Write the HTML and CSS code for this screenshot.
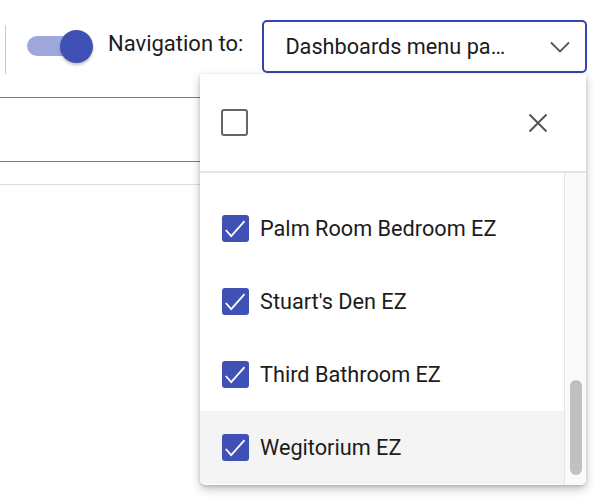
FILE: index.html
```html
<!DOCTYPE html>
<html>
<head>
<meta charset="utf-8">
<link rel="stylesheet" href="styles.css">
</head>
<body>
<div class="page">
  <div class="topbar">
    <div class="vdivider"></div>
    <div class="switch">
      <div class="track"></div>
      <div class="knob"></div>
    </div>
    <div class="label">Navigation to:</div>
    <div class="select">
      <span class="select-text">Dashboards menu pa…</span>
      <svg class="chevron" width="22" height="12" viewBox="0 0 22 12"><path d="M2 1.5 L11 10.5 L20 1.5" fill="none" stroke="#555" stroke-width="1.8"/></svg>
    </div>
  </div>
  <div class="field"></div>
  <div class="rule"></div>

  <div class="panel">
    <div class="panel-head">
      <span class="cb"></span>
      <svg class="close" width="20" height="20" viewBox="0 0 20 20"><path d="M1.5 1.5 L18.5 18.5 M18.5 1.5 L1.5 18.5" fill="none" stroke="#555" stroke-width="2"/></svg>
    </div>
    <div class="panel-body">
      <div class="list">
        <div class="spacer"></div>
        <div class="item"><span class="cb checked"><svg width="27" height="27" viewBox="0 0 27 27"><path d="M3.8 15 L9.2 21.2 L22.5 6.2" fill="none" stroke="#fff" stroke-width="1.8"/></svg></span><span class="item-text">Palm Room Bedroom EZ</span></div>
        <div class="item"><span class="cb checked"><svg width="27" height="27" viewBox="0 0 27 27"><path d="M3.8 15 L9.2 21.2 L22.5 6.2" fill="none" stroke="#fff" stroke-width="1.8"/></svg></span><span class="item-text">Stuart's Den EZ</span></div>
        <div class="item"><span class="cb checked"><svg width="27" height="27" viewBox="0 0 27 27"><path d="M3.8 15 L9.2 21.2 L22.5 6.2" fill="none" stroke="#fff" stroke-width="1.8"/></svg></span><span class="item-text">Third Bathroom EZ</span></div>
        <div class="item active"><span class="cb checked"><svg width="27" height="27" viewBox="0 0 27 27"><path d="M3.8 15 L9.2 21.2 L22.5 6.2" fill="none" stroke="#fff" stroke-width="1.8"/></svg></span><span class="item-text">Wegitorium EZ</span></div>
      </div>
      <div class="scrollbar"><div class="thumb"></div></div>
    </div>
  </div>
</div>
</body>
</html>
```
FILE: styles.css
```css
html, body {
  margin: 0;
  padding: 0;
  background: #fff;
}
body {
  font-family: Roboto, "Liberation Sans", sans-serif;
  color: #1c1c1c;
  width: 612px;
  height: 500px;
  overflow: hidden;
}
.page {
  position: relative;
  width: 612px;
  height: 500px;
}
.topbar {
  height: 74px;
  display: flex;
  align-items: flex-start;
  box-sizing: border-box;
  padding-top: 20px;
}
.vdivider {
  width: 1px;
  height: 49px;
  background: #c8c8c8;
  margin-left: 5px;
  margin-top: 5px;
}
.switch {
  position: relative;
  width: 66px;
  height: 33px;
  margin-left: 21px;
  margin-top: 10px;
}
.track {
  position: absolute;
  left: 0;
  top: 6px;
  width: 58px;
  height: 20px;
  border-radius: 10px;
  background: #9fa8da;
}
.knob {
  position: absolute;
  left: 33px;
  top: 0;
  width: 33px;
  height: 33px;
  border-radius: 50%;
  background: #3f51b5;
  box-shadow: 0 2px 3px rgba(0,0,0,0.25);
}
.label {
  margin-left: 15px;
  margin-top: 11px;
  font-size: 22px;
  line-height: 26px;
  color: #1c1c1c;
}
.select {
  margin-left: 19px;
  width: 325px;
  height: 53px;
  box-sizing: border-box;
  border: 2px solid #3346b0;
  border-radius: 5px;
  display: flex;
  align-items: center;
  padding-left: 21px;
  padding-right: 14px;
}
.select-text {
  flex: 1;
  font-size: 21.7px;
  color: #1c1c1c;
  white-space: nowrap;
}
.chevron {
  display: block;
}
.field {
  margin-top: 23px;
  width: 400px;
  height: 63px;
  border-top: 1px solid #7a7a7a;
  border-bottom: 1px solid #7a7a7a;
}
.rule {
  margin-top: 22px;
  width: 400px;
  height: 1px;
  background: #dcdcdc;
}
.panel {
  position: absolute;
  left: 200px;
  top: 74px;
  width: 386px;
  height: 411px;
  background: #fff;
  border-radius: 0 0 5px 5px;
  box-shadow: 0 4px 10px rgba(0,0,0,0.25), 0 1px 3px rgba(0,0,0,0.15);
  overflow: hidden;
  display: flex;
  flex-direction: column;
}
.panel-head {
  height: 99px;
  flex: none;
  border-bottom: 2px solid #e4e4e4;
  display: flex;
  align-items: center;
  justify-content: space-between;
  padding-left: 21px;
  padding-right: 38px;
  box-sizing: border-box;
}
.cb {
  width: 27px;
  height: 27px;
  box-sizing: border-box;
  border: 2.8px solid #666;
  border-radius: 3px;
  display: block;
  flex: none;
}
.cb.checked {
  border: none;
  background: #3f51b5;
  position: relative;
}
.cb.checked svg {
  display: block;
}
.close {
  display: block;
}
.panel-body {
  flex: 1;
  display: flex;
  min-height: 0;
}
.list {
  flex: 1;
  overflow: hidden;
}
.spacer {
  height: 19px;
}
.item {
  height: 73px;
  display: flex;
  align-items: center;
  padding-left: 22px;
}
.item.active {
  background: #f4f4f4;
}
.item-text {
  margin-left: 11px;
  font-size: 21.7px;
  color: #1c1c1c;
}
.scrollbar {
  width: 21px;
  flex: none;
  background: #fafafa;
  border-left: 1px solid #e6e6e6;
  position: relative;
}
.thumb {
  position: absolute;
  left: 5px;
  top: 207px;
  width: 12px;
  height: 95px;
  border-radius: 6px;
  background: #c1c1c1;
}
```
